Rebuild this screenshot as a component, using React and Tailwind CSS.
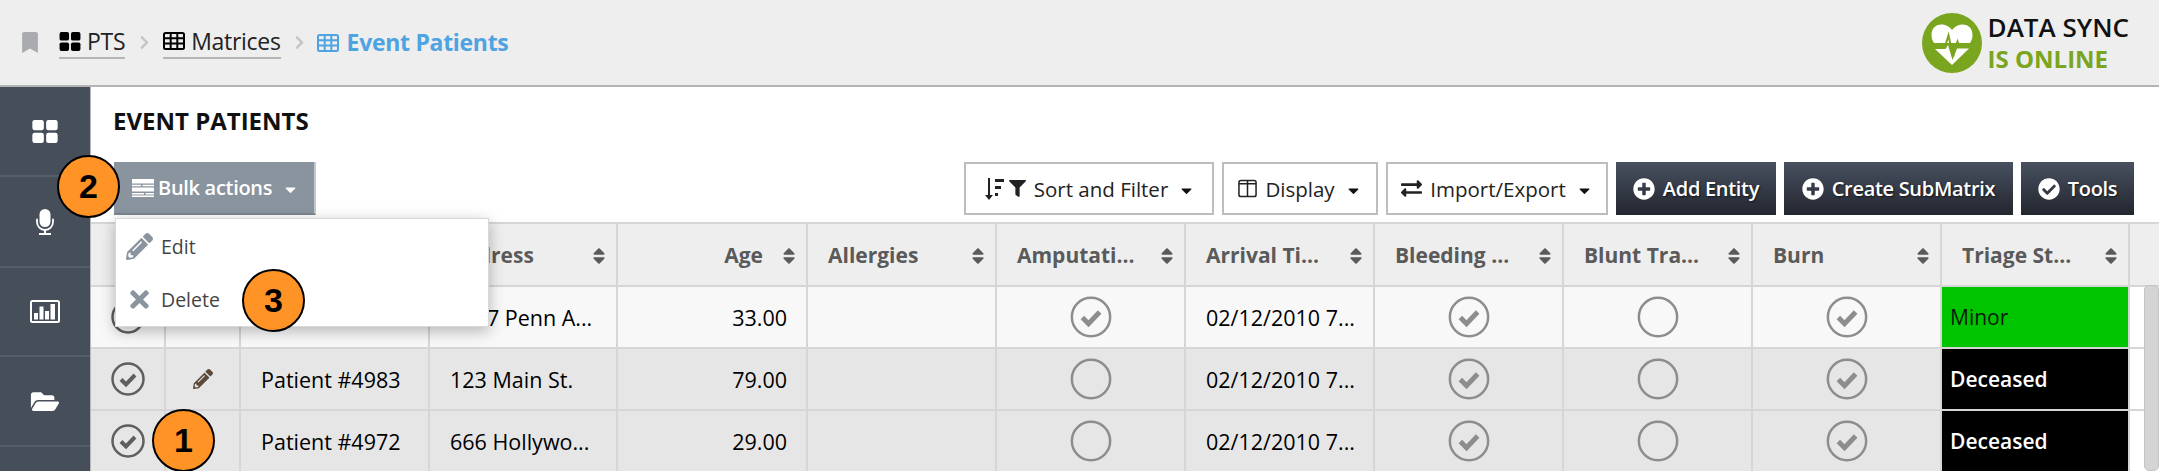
import React from 'react';
import {
  FaBookmark, FaChevronRight, FaFolderOpen, FaPencilAlt, FaTimes,
  FaCheckCircle, FaPlusCircle, FaSort, FaFilter, FaExchangeAlt, FaCaretDown,
} from 'react-icons/fa';

const COLUMNS = 'grid-cols-[75px_75px_189px_188px_190px_189px_189px_189px_189px_189px_189px_188px_29px] grid-rows-[1fr]';

const HEADERS = [
  { label: '', sort: false },
  { label: '', sort: false },
  { label: '', sort: false },
  { label: 'Address', sort: true },
  { label: 'Age', sort: true, right: true },
  { label: 'Allergies', sort: true },
  { label: 'Amputati...', sort: true },
  { label: 'Arrival Ti...', sort: true },
  { label: 'Bleeding ...', sort: true },
  { label: 'Blunt Tra...', sort: true },
  { label: 'Burn', sort: true },
  { label: 'Triage St...', sort: true },
];

const ROWS = [
  {
    name: 'Patient #4990', address: '1417 Penn A...', age: '33.00', edit: false, amp: true, bleed: true, blunt: false, burn: true,
    triage: 'Minor', triageClass: 'bg-[#00c400] text-[#0a1a0a] font-normal', rowClass: 'bg-[#f8f8f8]',
  },
  {
    name: 'Patient #4983', address: '123 Main St.', age: '79.00', edit: true, amp: false, bleed: true, blunt: false, burn: true,
    triage: 'Deceased', triageClass: 'bg-black text-white font-semibold', rowClass: 'bg-[#e6e6e6]',
  },
  {
    name: 'Patient #4972', address: '666 Hollywo...', age: '29.00', edit: true, amp: false, bleed: true, blunt: false, burn: true,
    triage: 'Deceased', triageClass: 'bg-black text-white font-semibold', rowClass: 'bg-[#e6e6e6]',
  },
];

// Four rounded squares
const GridIcon = ({ className }) => (
  <svg viewBox="0 0 22 20" className={className} fill="currentColor">
    <rect x="0" y="0" width="10" height="9" rx="2" />
    <rect x="12" y="0" width="10" height="9" rx="2" />
    <rect x="0" y="11" width="10" height="9" rx="2" />
    <rect x="12" y="11" width="10" height="9" rx="2" />
  </svg>
);

const TableIcon = ({ className }) => (
  <svg viewBox="0 0 22 18" className={className} fill="none" stroke="currentColor" strokeWidth="2">
    <rect x="1" y="1" width="20" height="16" rx="1.5" />
    <path d="M1 6.3h20M1 11.6h20M7.7 1v16M14.3 1v16" />
  </svg>
);

const MicIcon = ({ className }) => (
  <svg viewBox="0 0 18 26" className={className} fill="currentColor">
    <rect x="3.500" y="0" width="11" height="18" rx="5.500" />
    <path d="M1 10.500v2.500a8 8 0 0 0 16 0v-2.500" fill="none" stroke="currentColor" strokeWidth="1.800" strokeLinecap="round" />
    <path d="M8 20.500h2V24H8zM3 24h12v2H3z" />
  </svg>
);

const ChartIcon = ({ className }) => (
  <svg viewBox="0 0 30 23" className={className}>
    <rect x="1" y="1" width="28" height="21" rx="1.500" fill="none" stroke="currentColor" strokeWidth="2" />
    <path d="M4 13h4v6.500H4zM9.500 6.500h4v13h-4zM15 11h4v8.500h-4zM20.500 4H25v15.500h-4.500z" fill="currentColor" />
  </svg>
);

const BulkIcon = ({ className }) => (
  <svg viewBox="0 0 22 18" className={className} fill="currentColor">
    <path d="M0 0h22v4.500H0zM0 5.700h9v1.500H0zM10.500 5.700H22v1.500H10.500zM0 8.600h22v4H0zM0 14h12v1.500H0zM13.500 14H22v1.500h-8.500zM0 16.500h22V18H0z" />
  </svg>
);

const SortAmountIcon = ({ className }) => (
  <svg viewBox="0 0 20 24" className={className} fill="currentColor">
    <path d="M4 1h2v17h3l-4 5-4-5h3z" />
    <path d="M11 2h9v3h-9zM11 9h6v3h-6zM11 16h3v3h-3z" />
  </svg>
);

const ColumnsIcon = ({ className }) => (
  <svg viewBox="0 0 20 20" className={className} fill="none" stroke="currentColor" strokeWidth="1.600">
    <rect x="1" y="1.500" width="18" height="17" rx="2" />
    <path d="M10 1.500v17M1 5h18" />
  </svg>
);

const HeartLogo = () => (
  <svg viewBox="0 0 60 60" className="w-[60px] h-[60px] shrink-0">
    <circle cx="30" cy="30" r="30" fill="#7aa51e" />
    <path d="M30 17c-3-4-7-5.500-10.500-5.500C13 11.500 9.500 16 9.500 22c0 3 .8 5.500 2.500 8h36c1.700-2.500 2.500-5 2.500-8 0-6-3.500-10.500-10-10.500-3.500 0-7.500 1.500-10.500 5.500z" fill="#fff" />
    <path d="M13 36h10.500l2.500-4 4.500 15 4.500-11.500H47L30 52z" fill="#fff" />
    <path d="M8 33.500h15l3.500-11 4.500 21 4.500-15 2 5H52" fill="none" stroke="#7aa51e" strokeWidth="2" />
  </svg>
);

const CheckCircle = ({ checked, color, stroke = 2, className }) => (
  <svg viewBox="0 0 34 34" className={className} fill="none" stroke={color}>
    <circle cx="17" cy="17" r="15.500" strokeWidth={stroke} />
    {checked && <path d="M10 17.500l5 5 9-9.500" strokeWidth="4" />}
  </svg>
);

const Badge = ({ n, className }) => (
  <div
    className={`absolute z-30 w-[63px] h-[63px] rounded-full bg-[#ff9326] border-2 border-black flex items-center justify-center text-[34px] font-bold text-black ${className}`}
    style={{ fontFamily: '"Liberation Sans", Arial, sans-serif' }}
  >
    {n}
  </div>
);

const LightButton = ({ icon, label, className }) => (
  <button className={`h-[53px] flex items-center justify-center gap-[8px] bg-white border-2 border-[#bdbdbd] text-[20.500px] text-[#222] ${className}`}>
    {icon}
    <span className="pt-[1px]">{label}</span>
    <FaCaretDown className="w-[17px] h-[17px] ml-[2px] mt-1 text-[#111]" />
  </button>
);

const DarkButton = ({ icon, label, className }) => (
  <button className={`h-[53px] flex items-center justify-center gap-[8px] bg-gradient-to-b from-[#495160] to-[#22262f] text-white font-semibold text-[20px] tracking-[-0.3px] [text-shadow:1px_1px_2px_rgba(0,0,0,0.6)] ${className}`}>
    {icon}
    <span>{label}</span>
  </button>
);

const SideItem = ({ children, className }) => (
  <div className={`flex items-center justify-center border-b-2 border-[#565e6a] text-white ${className}`}>
    {children}
  </div>
);

const Cell = ({ children, className = '' }) => (
  <div className={`min-w-0 flex items-center border-r-2 border-[#d6d6d6] whitespace-nowrap overflow-hidden ${className}`}>
    {children}
  </div>
);

const Check = ({ on }) => (
  <CheckCircle checked={on} color="#8d8d8d" className="w-[42px] h-[42px]" />
);

const App = () => {
  return (
    <div className="relative w-[2159px] h-[471px] overflow-hidden bg-white text-black" style={{ fontFamily: '"Open Sans", sans-serif' }}>
      {/* Barra superior */}
      <header className="h-[87px] bg-[#eeeeee] border-b-2 border-[#b4b4b4] flex items-center pl-[21px] pr-[30px]">
        <FaBookmark className="w-[18px] h-[21px] text-[#a9abae] mr-[20px]" />
        <a className="flex items-center gap-[6px] h-[33px] pb-[1px] border-b-2 border-[#b5b5b5] text-[23px] text-[#222] tracking-[-0.3px]">
          <GridIcon className="w-[22px] h-[19px] text-black" />
          <span>PTS</span>
        </a>
        <FaChevronRight className="w-[13px] h-[15px] ml-[13px] mr-[12px] text-[#c4c4c4]" />
        <a className="flex items-center gap-[6px] h-[33px] pb-[1px] border-b-2 border-[#b5b5b5] text-[23px] text-[#222] tracking-[-0.3px]">
          <TableIcon className="w-[22px] h-[18px] text-black" />
          <span>Matrices</span>
        </a>
        <FaChevronRight className="w-[13px] h-[15px] ml-[12px] mr-[11px] text-[#c4c4c4]" />
        <div className="flex items-center gap-[8px] text-[23px] font-bold text-[#4ea3e2] tracking-[-0.3px]">
          <TableIcon className="w-[22px] h-[18px]" />
          <span>Event Patients</span>
        </div>
        <div className="ml-auto flex items-center gap-[6px]">
          <HeartLogo />
          <div className="flex flex-col text-[26px] font-semibold leading-[32px]">
            <span className="text-[#111]">DATA SYNC</span>
            <span className="text-[#7aa51e] font-bold text-[24px]">IS ONLINE</span>
          </div>
        </div>
      </header>

      <div className="flex h-[384px]">
        {/* Menú lateral */}
        <nav className="w-[91px] shrink-0 bg-[#464e5a] flex flex-col border-r border-[#b8b8b8]">
          <SideItem className="h-[90px]"><GridIcon className="w-[26px] h-[23px]" /></SideItem>
          <SideItem className="h-[91px]"><MicIcon className="w-[18px] h-[26px]" /></SideItem>
          <SideItem className="h-[89px]"><ChartIcon className="w-[30px] h-[23px]" /></SideItem>
          <SideItem className="h-[90px]"><FaFolderOpen className="w-[30px] h-[25px]" /></SideItem>
        </nav>

        <main className="flex-1 min-w-0 flex flex-col">
          <h1 className="h-[75px] pl-[22px] pt-[19px] text-[24px] font-bold text-[#111] leading-[29px]">EVENT PATIENTS</h1>

          {/* Acciones */}
          <div className="h-[60px] flex items-start pl-[23px] pr-[25px]">
            <button className="w-[202px] h-[53px] flex items-center pl-[18px] gap-[4px] bg-[#8a949f] border-r-2 border-[#c3c8cd] border-b-2 border-b-[#7b8590] text-white font-semibold text-[20px] tracking-[-0.3px]">
              <BulkIcon className="w-[22px] h-[18px]" />
              <span className="pt-[1px]">Bulk actions</span>
              <FaCaretDown className="w-[17px] h-[17px] ml-[6px] mt-1" />
            </button>
            <div className="ml-auto flex gap-[8px]">
              <LightButton
                className="w-[250px]"
                label="Sort and Filter"
                icon={<span className="flex items-center gap-[4px]"><SortAmountIcon className="w-[22px] h-[24px]" /><FaFilter className="w-[17px] h-[17px]" /></span>}
              />
              <LightButton className="w-[156px]" label="Display" icon={<ColumnsIcon className="w-[19px] h-[19px]" />} />
              <LightButton className="w-[222px]" label="Import/Export" icon={<FaExchangeAlt className="w-[21px] h-[21px]" />} />
              <DarkButton className="w-[160px]" label="Add Entity" icon={<FaPlusCircle className="w-[22px] h-[22px]" />} />
              <DarkButton className="w-[229px]" label="Create SubMatrix" icon={<FaPlusCircle className="w-[22px] h-[22px]" />} />
              <DarkButton className="w-[113px]" label="Tools" icon={<FaCheckCircle className="w-[22px] h-[22px]" />} />
            </div>
          </div>

          {/* Tabla */}
          <div className="flex-1 min-h-0 overflow-hidden border-t-2 border-[#d6d6d6] text-[21.500px]">
            <div className={`grid ${COLUMNS} h-[63px] bg-[#eeeeee] border-b-2 border-[#d6d6d6]`}>
              {HEADERS.map((h, i) => (
                <Cell key={i} className="pl-[20px] pr-[10px] pt-[2px] text-[21px] font-bold text-[#5a5a5a]">
                  <span className={h.right ? 'ml-auto mr-[19px]' : ''}>{h.label}</span>
                  {h.sort && <FaSort className={`w-[14px] h-[20px] text-[#5a5a5a] ${h.right ? '' : 'ml-auto'}`} />}
                </Cell>
              ))}
              <div />
            </div>

            {ROWS.map((row) => (
              <div key={row.name} className={`grid ${COLUMNS} h-[62px] border-b-2 border-[#d6d6d6]`}>
                <Cell className={`${row.rowClass} justify-center pl-[1px]`}>
                  <CheckCircle checked color="#5f5f5f" stroke={2.5} className="w-[34px] h-[34px]" />
                </Cell>
                <Cell className={`${row.rowClass} justify-center`}>
                  {row.edit && <FaPencilAlt className="w-[20px] h-[20px] text-[#5b4a3c]" />}
                </Cell>
                <Cell className={`${row.rowClass} pl-[20px] pt-[2px]`}>{row.name}</Cell>
                <Cell className={`${row.rowClass} pl-[20px] pt-[2px]`}>{row.address}</Cell>
                <Cell className={`${row.rowClass} justify-end pr-[19px] pt-[2px]`}>{row.age}</Cell>
                <Cell className={row.rowClass} />
                <Cell className={`${row.rowClass} justify-center`}><Check on={row.amp} /></Cell>
                <Cell className={`${row.rowClass} pl-[20px] pt-[2px]`}>02/12/2010 7...</Cell>
                <Cell className={`${row.rowClass} justify-center`}><Check on={row.bleed} /></Cell>
                <Cell className={`${row.rowClass} justify-center`}><Check on={row.blunt} /></Cell>
                <Cell className={`${row.rowClass} justify-center`}><Check on={row.burn} /></Cell>
                <Cell className={`${row.triageClass} pl-[8px] pt-[2px] text-[21px]`}>{row.triage}</Cell>
                <div className="bg-white" />
              </div>
            ))}
          </div>
        </main>
      </div>

      {/* Barra de scroll */}
      <div className="absolute left-[2144px] top-[285px] w-[15px] h-[186px] rounded-[5px] bg-[#d4d4d4] border border-[#c4c4c4]" />

      {/* Menú desplegable */}
      <div className="absolute z-20 left-[115px] top-[218px] w-[374px] h-[109px] bg-white border border-[#d8d8d8] shadow-[0_4px_14px_rgba(0,0,0,0.28)] text-[19.500px] text-[#444]">
        <div className="h-[54px] flex items-center pl-[10px] gap-[8px]">
          <FaPencilAlt className="w-[27px] h-[27px] text-[#8a949f]" />
          <span className="pt-[1px]">Edit</span>
        </div>
        <div className="h-[53px] flex items-center pl-[10px] gap-[8px]">
          <FaTimes className="w-[27px] h-[27px] text-[#8a949f]" />
          <span>Delete</span>
        </div>
      </div>

      <Badge n="2" className="left-[57px] top-[155px]" />
      <Badge n="3" className="left-[242px] top-[269px]" />
      <Badge n="1" className="left-[152px] top-[409px]" />
    </div>
  );
};

export default App;
